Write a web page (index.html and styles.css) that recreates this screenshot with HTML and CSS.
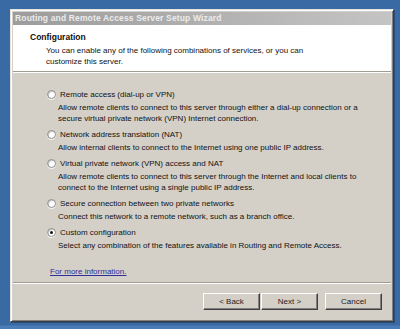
FILE: index.html
```html
<!DOCTYPE html>
<html lang="en">

<head>
    <meta charset="UTF-8">
    <title>Routing and Remote Access Server Setup Wizard</title>
    <link rel="stylesheet" href="styles.css">
</head>

<body>
    <div class="window">
        <div class="title-bar">Routing and Remote Access Server Setup Wizard</div>

        <!-- Page header -->
        <div class="page-header">
            <h1>Configuration</h1>
            <p>You can enable any of the following combinations of services, or you can<br>customize this server.</p>
        </div>

        <div class="page-body">
            <div class="option">
                <div class="option-label"><span class="radio"></span>Remote access (dial-up or VPN)</div>
                <p>Allow remote clients to connect to this server through either a dial-up connection or a<br>secure virtual private network (VPN) Internet connection.</p>
            </div>
            <div class="option">
                <div class="option-label"><span class="radio"></span>Network address translation (NAT)</div>
                <p>Allow internal clients to connect to the Internet using one public IP address.</p>
            </div>
            <div class="option">
                <div class="option-label"><span class="radio"></span>Virtual private network (VPN) access and NAT</div>
                <p>Allow remote clients to connect to this server through the Internet and local clients to<br>connect to the Internet using a single public IP address.</p>
            </div>
            <div class="option">
                <div class="option-label"><span class="radio"></span>Secure connection between two private networks</div>
                <p>Connect this network to a remote network, such as a branch office.</p>
            </div>
            <div class="option">
                <div class="option-label"><span class="radio checked"></span>Custom configuration</div>
                <p>Select any combination of the features available in Routing and Remote Access.</p>
            </div>

            <a class="more-info" href="#">For more information.</a>
        </div>

        <div class="button-row">
            <button class="button">&lt; Back</button>
            <button class="button">Next &gt;</button>
            <button class="button cancel">Cancel</button>
        </div>
    </div>
</body>

</html>
```

FILE: styles.css
```css
/* General Reset */
* {
    margin: 0;
    padding: 0;
    box-sizing: border-box;
}

body {
    height: 329px;
    overflow: hidden;
    background: linear-gradient(to bottom, #3a6aa4 0, #3a6aa4 325px, #4a7cb8 326px);
    font-family: 'Liberation Sans', Arial, sans-serif;
    font-size: 8px;
    color: #111;
}

/* Window frame */
.window {
    margin: 9px 0 0 10px;
    width: 384px;
    height: 313px;
    background: #d4d0c8;
    border: 1px solid;
    border-color: #e6e3dc #3c3c3c #3c3c3c #e6e3dc;
    box-shadow: inset 1px 1px #ffffff, inset -1px -1px #808080, 1px 1px 0 #2a4f7d;
    padding: 2px 2px 0 2px;
    display: flex;
    flex-direction: column;
}

.title-bar {
    height: 13px;
    line-height: 12px;
    padding-left: 2px;
    background: linear-gradient(to right, #9c9c9c, #c4c4c4);
    color: #ececec;
    font-weight: bold;
    font-size: 8.5px;
    letter-spacing: 0.15px;
}

/* Header */
.page-header {
    background: #ffffff;
    height: 47px;
    padding: 7px 0 0 17px;
    border-bottom: 1px solid #a09c94;
    box-shadow: 0 1px 0 #ffffff;
}

.page-header h1 {
    font-size: 8.5px;
    font-weight: bold;
    line-height: 11px;
}

.page-header p {
    margin: 2px 0 0 16px;
    line-height: 11px;
}

/* Options */
.page-body {
    padding: 17px 0 0 34px;
    height: 210px;
}

.option + .option {
    margin-top: 5px;
}

.option-label {
    display: flex;
    align-items: center;
    line-height: 11px;
}

.option p {
    margin: 2px 0 0 11px;
    line-height: 11px;
}

.radio {
    width: 9px;
    height: 9px;
    margin-right: 4px;
    border-radius: 50%;
    background: #ffffff;
    border: 1px solid #8a8a8a;
    box-shadow: inset 1px 1px 0 #c8c8c8, 0 1px 0 #f4f4f4;
    position: relative;
}

.radio.checked::after {
    content: "";
    position: absolute;
    left: 2px;
    top: 2px;
    width: 3px;
    height: 3px;
    border-radius: 50%;
    background: #111;
}

.more-info {
    display: inline-block;
    margin: 15px 0 0 3px;
    color: #2e2e9e;
    line-height: 11px;
}

/* Buttons */
.button-row {
    border-top: 1px solid #a09c94;
    box-shadow: inset 0 1px 0 #ffffff;
    display: flex;
    padding: 10px 0 0 190px;
}

.button {
    width: 57px;
    height: 17px;
    margin-right: 1px;
    font-family: 'Liberation Sans', Arial, sans-serif;
    font-size: 8px;
    color: #222;
    background: #d4d0c8;
    border: 1px solid;
    border-color: #ffffff #404040 #404040 #ffffff;
    box-shadow: inset -1px -1px #808080;
}

.button.cancel {
    margin-left: 6px;
}
```
